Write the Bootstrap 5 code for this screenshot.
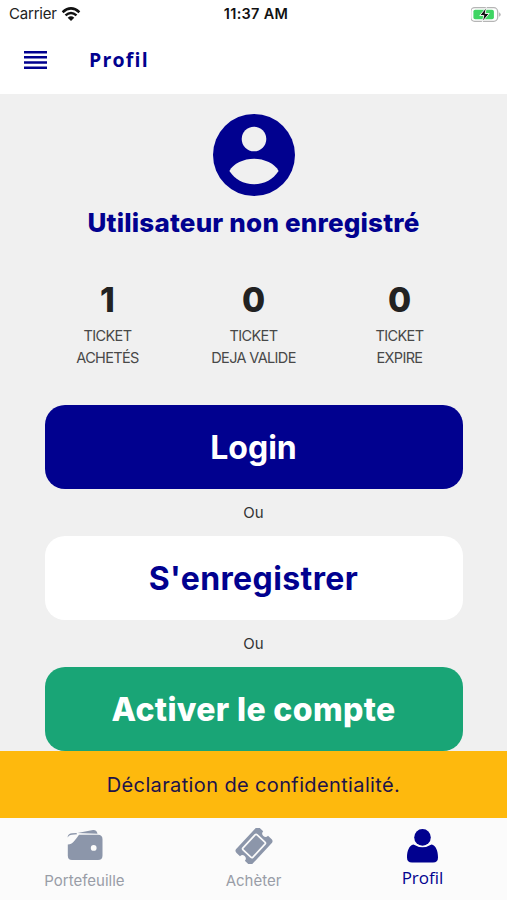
<!DOCTYPE html>
<html lang="fr">
<head>
<meta charset="utf-8">
<meta name="viewport" content="width=device-width, initial-scale=1">
<title>Profil</title>
<link href="https://cdn.jsdelivr.net/npm/bootstrap@5.3.0/dist/css/bootstrap.min.css" rel="stylesheet">
<style>
:root{--navy:#01018f;--page:#f0f0f0}
body{font-family:Inter,"Open Sans",sans-serif;background:var(--page);color:#222;height:900px;overflow:hidden}
svg{display:block;flex:none}
.status-bar{height:28px;font-size:15px;line-height:28px;color:#222}
.status-bar .col:first-child{padding-left:9px;letter-spacing:-.2px}
.clock{font-weight:600;font-size:14.5px;letter-spacing:.3px;color:#111}
.app-bar{height:66px;padding-left:24px;padding-bottom:2px}
.app-title{font:700 19.5px/30px "Open Sans",sans-serif;letter-spacing:1.2px;color:var(--navy);margin-left:42px}
.app-bar svg,.avatar{color:var(--navy)}
main{height:657px;padding:20px 44.5px 0}
.user-name{font-size:26px;font-weight:800;line-height:38px;letter-spacing:.2px;color:var(--navy);margin:8px 0 0}
.stats{margin-top:36px;width:438px;margin-left:-10px}
.stat-value{font-size:33.5px;font-weight:800;line-height:44px}
.stat-label{font-size:14.5px;line-height:22px;letter-spacing:-.65px;color:#484848;margin-top:3px}
.actions{padding-top:12px}
.action{height:84px;border:0;border-radius:20px;font-weight:700;font-size:32px;line-height:1;padding-top:8px}
.action-login,.action-login:hover{background:var(--navy);color:#fff}
.action-register,.action-register:hover{background:#fff;color:var(--navy);letter-spacing:.4px}
.action-activate,.action-activate:hover{background:#19a576;color:#fff;font-weight:800;letter-spacing:.35px}
.or{height:47px;line-height:47px;font-size:15px;color:#333}
.privacy{height:67px;background:#feb90d;color:#20124a;font-size:20px;letter-spacing:.37px}
.tabs{height:82px;background:#fbfbfb;font-size:15px;color:#9a9ea8}
.tabs a{color:#999da7;text-decoration:none;padding-top:10px}
.tabs svg{color:#8c96aa}
.tabs a.current,.tabs a.current svg{color:var(--navy)}
.tab-text{line-height:22px;margin-top:6px}
.current .tab-text{font-size:17px;margin-top:3px;font-family:"Open Sans",sans-serif}
</style>
</head>
<body class="d-flex flex-column">
<header class="bg-white">
  <div class="status-bar row g-0">
    <div class="col d-flex align-items-center"><span class="carrier">Carrier</span>
      <svg class="ms-1" width="20" height="15" viewBox="0 0 20 15" fill="none" stroke="#111" stroke-width="2.5"><path d="M1.600 5.200Q10-2.400 18.400 5.200M4.500 8.400Q10 3.500 15.500 8.400"/><path d="M6.700 10.700Q10 7.800 13.300 10.700L10 14z" fill="#111" stroke="none"/></svg>
    </div>
    <div class="col text-center"><span class="clock">11:37 AM</span></div>
    <div class="col d-flex justify-content-end align-items-center pe-1">
      <svg width="32" height="15" viewBox="0 0 32 15"><rect x="-.1" y=".7" width="27" height="13.600" rx="4" fill="#fff" stroke="#b5b5b5" stroke-width="1.300" transform="translate(-.2 0)"/><path d="M28.200 5.200q3 2.300 0 4.600z" fill="#aaa"/><rect x="2.400" y="2.800" width="20.500" height="9.400" rx="1.800" fill="#3fd563"/><path d="M15.400.3 8.800 8.500h4l-1.500 6.300 6.900-8.300h-4z" fill="#111" stroke="#fff" stroke-width=".9"/></svg>
    </div>
  </div>
  <nav class="app-bar d-flex align-items-center">
    <svg width="23" height="18" viewBox="0 0 23 18" fill="currentColor"><path d="M0 0h23v2.500H0zM0 5.100h23v2.500H0zM0 10.300h23v2.500H0zM0 15.400h23v2.500H0z"/></svg>
    <span class="app-title">Profil</span>
  </nav>
</header>
<main>
  <section class="text-center">
    <svg class="avatar mx-auto" width="82" height="82" viewBox="0 0 82 82"><circle cx="41" cy="41" r="41" fill="currentColor"/><circle cx="41" cy="25" r="12.300" fill="#f0f0f0"/><path d="M16.400 57C20 49.500 31 44.700 41 44.700S62 49.500 65.600 57C60.500 65 51.500 70.300 41 70.300S21.500 65 16.400 57z" fill="#f0f0f0"/></svg>
    <h1 class="user-name text-nowrap">Utilisateur non enregistré</h1>
  </section>
  <section class="stats row g-0 text-center">
    <div class="col"><div class="stat-value">1</div><div class="stat-label">TICKET<br>ACHETÉS</div></div>
    <div class="col"><div class="stat-value">0</div><div class="stat-label">TICKET<br>DEJA VALIDE</div></div>
    <div class="col"><div class="stat-value">0</div><div class="stat-label">TICKET<br>EXPIRE</div></div>
  </section>
  <section class="actions d-grid text-center mt-4">
    <button class="btn action action-login" type="button">Login</button>
    <div class="or">Ou</div>
    <button class="btn action action-register" type="button">S'enregistrer</button>
    <div class="or">Ou</div>
    <button class="btn action action-activate" type="button">Activer le compte</button>
  </section>
</main>
<footer>
  <div class="privacy d-flex align-items-center justify-content-center">Déclaration de confidentialité.</div>
  <nav class="tabs row g-0 text-center">
    <a class="col" href="#">
      <svg class="mx-auto" width="36" height="36" viewBox="0 0 36 36" fill="currentColor"><path d="M.5 9.500C.8 6.500 3 5.500 5 5.300L9.500 5 10 6.300 5 6.800C3 7 1.500 8 .5 9.500z"/><path d="M10.500 4.900 26 2Q29.500 1.500 30.500 5.700z"/><path fill-rule="evenodd" d="M12 6.800H31Q35.500 6.800 35.500 11.300V27.500Q35.500 32 31 32H5Q.8 32 .8 27.500V16.500C6 16.500 8 12 12 6.800zM26.700 17a2.900 2.900 0 1 0 0 5.800 2.900 2.900 0 0 0 0-5.800z"/></svg>
      <div class="tab-text">Portefeuille</div>
    </a>
    <a class="col" href="#">
      <svg class="mx-auto" width="38" height="36" viewBox="0 0 38 36"><g transform="translate(19 18) rotate(-47)"><path d="M-14-11H14Q17-11 17-8V-3.300A3.300 3.300 0 0 0 17 3.300V8Q17 11 14 11H-14Q-17 11-17 8V3.300A3.300 3.300 0 0 0-17-3.300V-8Q-17-11-14-11z" fill="currentColor"/><rect x="-10.300" y="-6.800" width="20.600" height="13.600" rx="1.500" fill="none" stroke="#fbfbfb" stroke-width="1.700"/></g></svg>
      <div class="tab-text">Achèter</div>
    </a>
    <a class="col current" href="#">
      <svg class="mx-auto" width="32" height="36" viewBox="0 0 32 36" fill="currentColor"><circle cx="15.500" cy="9.400" r="8.300"/><path d="M6.500 16.500Q15.500 22 24.500 16.500C29 17.500 31 23 31 29.500Q31 34.600 26 34.600H5Q0 34.600 0 29.500C0 23 2 17.500 6.500 16.500z"/></svg>
      <div class="tab-text">Profil</div>
    </a>
  </nav>
</footer>
<script src="https://cdn.jsdelivr.net/npm/bootstrap@5.3.0/dist/js/bootstrap.bundle.min.js"></script>
</body>
</html>
